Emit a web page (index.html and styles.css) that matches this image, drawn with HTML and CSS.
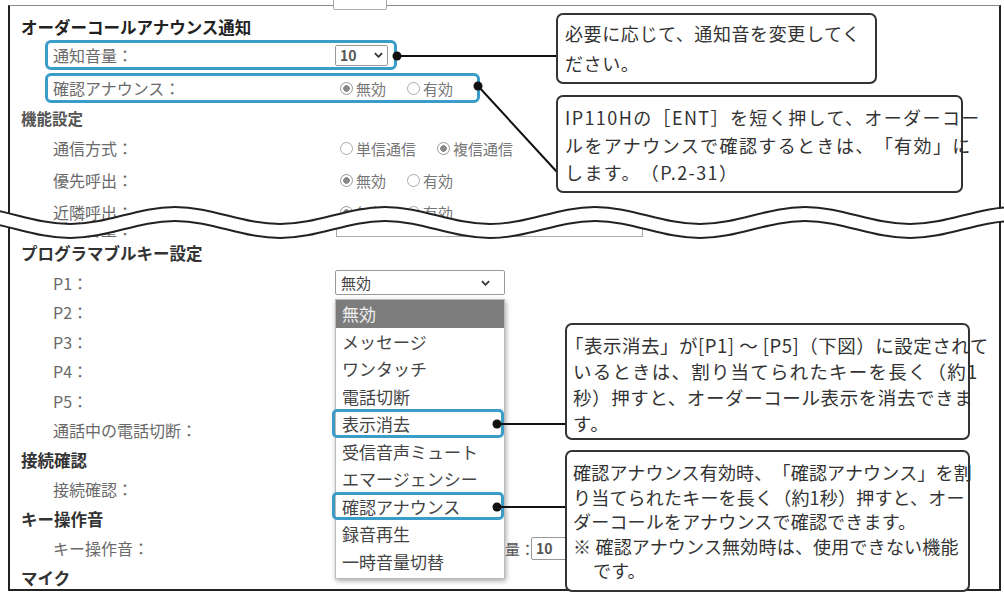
FILE: index.html
```html
<!DOCTYPE html>
<html lang="ja">
<head>
    <meta charset="UTF-8">
    <meta name="viewport" content="width=device-width, initial-scale=1.0">
    <title>オーダーコール設定</title>
    <link rel="stylesheet" href="styles.css">
</head>
<body>

<div class="figure">
    <div class="frame">
        <!-- 上段: オーダーコールアナウンス通知 / 機能設定 -->
        <div class="sec-top">
            <div class="head head-main">オーダーコールアナウンス通知</div>
            <div class="row boxed box-vol">
                <span class="label">通知音量：</span>
                <span class="select select-small">10<svg class="chev" viewBox="0 0 10 6" width="9" height="6"><polyline points="1,1 5,5 9,1"/></svg></span>
            </div>
            <div class="row boxed box-ann">
                <span class="label">確認アナウンス：</span>
                <span class="radios"><span class="ropt"><span class="radio on"></span>無効</span><span class="ropt"><span class="radio"></span>有効</span></span>
            </div>
            <div class="head head-sub">機能設定</div>
            <div class="row">
                <span class="label">通信方式：</span>
                <span class="radios"><span class="ropt"><span class="radio"></span>単信通信</span><span class="ropt"><span class="radio on"></span>複信通信</span></span>
            </div>
            <div class="row">
                <span class="label">優先呼出：</span>
                <span class="radios"><span class="ropt"><span class="radio on"></span>無効</span><span class="ropt"><span class="radio"></span>有効</span></span>
            </div>
            <div class="row">
                <span class="label">近隣呼出：</span>
                <span class="radios"><span class="ropt"><span class="radio on"></span>無効</span><span class="ropt"><span class="radio"></span>有効</span></span>
            </div>
        </div>

        <!-- 下段: プログラマブルキー設定 ほか -->
        <div class="sec-bottom">
            <div class="row row-b row-cut">
                <span class="label">近隣音量：</span>
                <span class="input-part"></span>
            </div>
            <div class="head head-b">プログラマブルキー設定</div>
            <div class="row row-b">
                <span class="label">P1：</span>
                <span class="select select-wide">無効<svg class="chev" viewBox="0 0 10 6" width="9" height="6"><polyline points="1,1 5,5 9,1"/></svg></span>
            </div>
            <div class="row row-b"><span class="label">P2：</span></div>
            <div class="row row-b"><span class="label">P3：</span></div>
            <div class="row row-b"><span class="label">P4：</span></div>
            <div class="row row-b"><span class="label">P5：</span></div>
            <div class="row row-b"><span class="label">通話中の電話切断：</span></div>
            <div class="head head-b">接続確認</div>
            <div class="row row-b"><span class="label">接続確認：</span></div>
            <div class="head head-b">キー操作音</div>
            <div class="row row-b">
                <span class="label">キー操作音：</span>
                <span class="vol">音量：</span>
                <span class="select select-small select-vol">10</span>
            </div>
            <div class="head head-b">マイク</div>
        </div>
    </div>

    <!-- 上端で切れているセレクト -->
    <div class="stub"></div>

    <!-- 省略の波線 -->
    <svg class="wave" viewBox="0 195 1004 50" width="1004" height="50">
        <defs>
            <path id="wv" d="M-35,207 C3.2,207 31.8,224 70,224 C108.2,224 136.8,207 175,207 C213.2,207 241.8,224 280,224 C318.2,224 346.8,207 385,207 C423.2,207 451.8,224 490,224 C528.2,224 556.8,207 595,207 C633.2,207 661.8,224 700,224 C738.2,224 766.8,207 805,207 C843.2,207 871.8,224 910,224 C948.2,224 976.8,207 1015,207"/>
        </defs>
        <use href="#wv" class="wv-fill" transform="translate(0,7)"/>
        <use href="#wv" class="wv-line"/>
        <use href="#wv" class="wv-line" transform="translate(0,14)"/>
    </svg>

    <!-- プルダウン展開 -->
    <div class="dropdown">
        <div class="opt sel">無効</div>
        <div class="opt">メッセージ</div>
        <div class="opt">ワンタッチ</div>
        <div class="opt">電話切断</div>
        <div class="opt hl">表示消去</div>
        <div class="opt">受信音声ミュート</div>
        <div class="opt">エマージェンシー</div>
        <div class="opt hl">確認アナウンス</div>
        <div class="opt">録音再生</div>
        <div class="opt">一時音量切替</div>
    </div>

    <!-- 引き出し線 -->
    <svg class="links" viewBox="0 0 1004 596" width="1004" height="596">
        <line x1="397" y1="56" x2="557" y2="56"/>
        <line x1="478" y1="86" x2="557" y2="172"/>
        <line x1="497" y1="424" x2="566" y2="424"/>
        <line x1="497" y1="507" x2="566" y2="507"/>
        <circle cx="397" cy="56" r="4.5"/>
        <circle cx="478" cy="86" r="4.5"/>
        <circle cx="497" cy="424" r="4.5"/>
        <circle cx="497" cy="507" r="4.5"/>
    </svg>

    <!-- 説明 -->
    <div class="callout c1">必要に応じて、通知音を変更してく<br>ださい。</div>
    <div class="callout c2">IP110Hの［ENT］を短く押して、オーダーコー<br>ルをアナウンスで確認するときは、「有効」に<br>します。（P.2-31）</div>
    <div class="callout c3"><span class="l1">「表示消去」が[P1] ～ [P5]（下図）に設定されて</span><br><span class="wide">いるときは、割り当てられたキーを長く（約1</span><br>秒）押すと、オーダーコール表示を消去できま<br>す。</div>
    <div class="callout c4">確認アナウンス有効時、「確認アナウンス」を割<br>り当てられたキーを長く（約1秒）押すと、オー<br>ダーコールをアナウンスで確認できます。<br>※ 確認アナウンス無効時は、使用できない機能<br><span class="indent">です。</span></div>
</div>

</body>
</html>
```

FILE: styles.css
```css
body {
    margin: 0;
    background: #fff;
    font-family: "Noto Sans CJK JP", "Noto Sans", sans-serif;
    color: #333;
    text-spacing-trim: space-all;
}
.figure {
    position: relative;
    width: 1004px;
    height: 596px;
    overflow: hidden;
}
.frame {
    box-sizing: border-box;
    margin: 5px 0 0 8px;
    width: 993px;
    height: 586px;
    border: 2px solid #222;
    border-top: 1px solid #888;
    overflow: hidden;
}

/* sections */
.sec-top {
    box-sizing: border-box;
    height: 203px;
    padding-top: 8px;
}
.head {
    display: flex;
    align-items: center;
    height: 26px;
    padding-left: 11px;
    font-size: 16.5px;
    font-weight: bold;
    color: #222;
}
.head-sub {
    height: 29px;
    font-size: 15.5px;
    color: #555;
}
.head-b {
    height: 29.5px;
    color: #333;
}
.row {
    display: flex;
    align-items: center;
    height: 32px;
    padding-left: 43px;
    font-size: 16px;
    color: #6a6a6a;
}
.row-b {
    height: 29.5px;
}
.row-cut {
    align-items: flex-end;
}
.row-cut .label {
    line-height: 18px;
    margin-bottom: 1px;
}
.label {
    flex: none;
    width: 282px;
}
.boxed {
    box-sizing: border-box;
    height: 30px;
    margin-left: 35px;
    padding-left: 5px;
    border: 3px solid #3a9cc9;
    border-radius: 6px;
}
.box-vol {
    width: 352px;
}
.box-ann {
    width: 435px;
    margin-top: 3px;
}

/* form parts */
.select {
    box-sizing: border-box;
    display: flex;
    align-items: center;
    justify-content: space-between;
    height: 21px;
    padding: 0 4px;
    border: 1px solid #999;
    border-radius: 2px;
    font-size: 14px;
    font-weight: bold;
    color: #555;
}
.select-small {
    width: 53px;
}
.select-wide {
    width: 170px;
    height: 25px;
    padding: 0 14px 0 5px;
    font-size: 15px;
    font-weight: normal;
    color: #444;
}
.chev polyline {
    fill: none;
    stroke: #333;
    stroke-width: 2;
}
.vol {
    margin-left: 155px;
    font-size: 15px;
    color: #555;
}
.select-vol {
    margin-left: -4px;
    height: 23px;
}
.input-part {
    box-sizing: border-box;
    width: 307px;
    height: 13px;
    margin: 0 0 1.5px 1px;
    border: 1px solid #aaa;
    border-top: none;
}
.radios {
    display: flex;
    align-items: center;
    font-size: 15px;
    color: #777;
}
.ropt {
    display: flex;
    align-items: center;
    margin-right: 16px;
}
.radio {
    box-sizing: border-box;
    width: 13px;
    height: 13px;
    margin: 0 3px 0 5px;
    border: 1px solid #aaa;
    border-radius: 50%;
}
.radio.on {
    border-color: #999;
    background: radial-gradient(circle, #888 0 3px, #fff 3.6px);
}

/* overlays */
.stub {
    position: absolute;
    left: 333px;
    top: -12px;
    width: 52px;
    height: 20px;
    border: 1px solid #aaa;
    border-radius: 2px;
    background: #fff;
}
.wave {
    position: absolute;
    left: 0;
    top: 195px;
}
.wv-fill {
    fill: none;
    stroke: #fff;
    stroke-width: 13;
}
.wv-line {
    fill: none;
    stroke: #222;
    stroke-width: 2;
}
.dropdown {
    position: absolute;
    left: 335px;
    top: 299px;
    box-sizing: border-box;
    width: 170px;
    padding-bottom: 3px;
    border: 1px solid #bbb;
    background: #fff;
    box-shadow: 1px 2px 5px rgba(0, 0, 0, 0.35);
}
.opt {
    position: relative;
    height: 27.5px;
    line-height: 27.5px;
    padding-left: 6px;
    font-size: 17px;
    color: #444;
}
.opt.sel {
    background: #7c7c7c;
    color: #eee;
}
.opt.hl::before {
    content: "";
    position: absolute;
    left: -4px;
    right: 0;
    top: -1px;
    bottom: 0;
    border: 3px solid #3a9cc9;
    border-radius: 5px;
}
.links {
    position: absolute;
    left: 0;
    top: 0;
    pointer-events: none;
}
.links line {
    stroke: #111;
    stroke-width: 2;
}
.links circle {
    fill: #111;
}
.callout {
    position: absolute;
    box-sizing: border-box;
    padding-left: 7px;
    border: 2px solid #333;
    border-radius: 7px;
    background: #fff;
    font-size: 18px;
    color: #333;
    white-space: nowrap;
}
.c1 {
    left: 556px;
    top: 13px;
    width: 321px;
    height: 71px;
    padding-top: 3px;
    line-height: 30px;
    letter-spacing: 0.6px;
}
.c2 {
    left: 556px;
    top: 95px;
    width: 407px;
    height: 98px;
    padding-top: 7px;
    line-height: 27.5px;
    letter-spacing: 1.4px;
}
.c3 {
    left: 565px;
    top: 323px;
    width: 405px;
    height: 117px;
    padding: 7px 0 0 6px;
    font-size: 18.5px;
    line-height: 26px;
    letter-spacing: 0.6px;
}
.c3 .l1 {
    margin-left: -8px;
    letter-spacing: 0.5px;
}
.c3 .wide {
    letter-spacing: 1.2px;
}
.c4 {
    left: 565px;
    top: 450px;
    width: 405px;
    height: 142px;
    padding: 8px 0 0 6px;
    line-height: 24.5px;
    letter-spacing: 0.2px;
}
.c4 .indent {
    padding-left: 20px;
}
```
